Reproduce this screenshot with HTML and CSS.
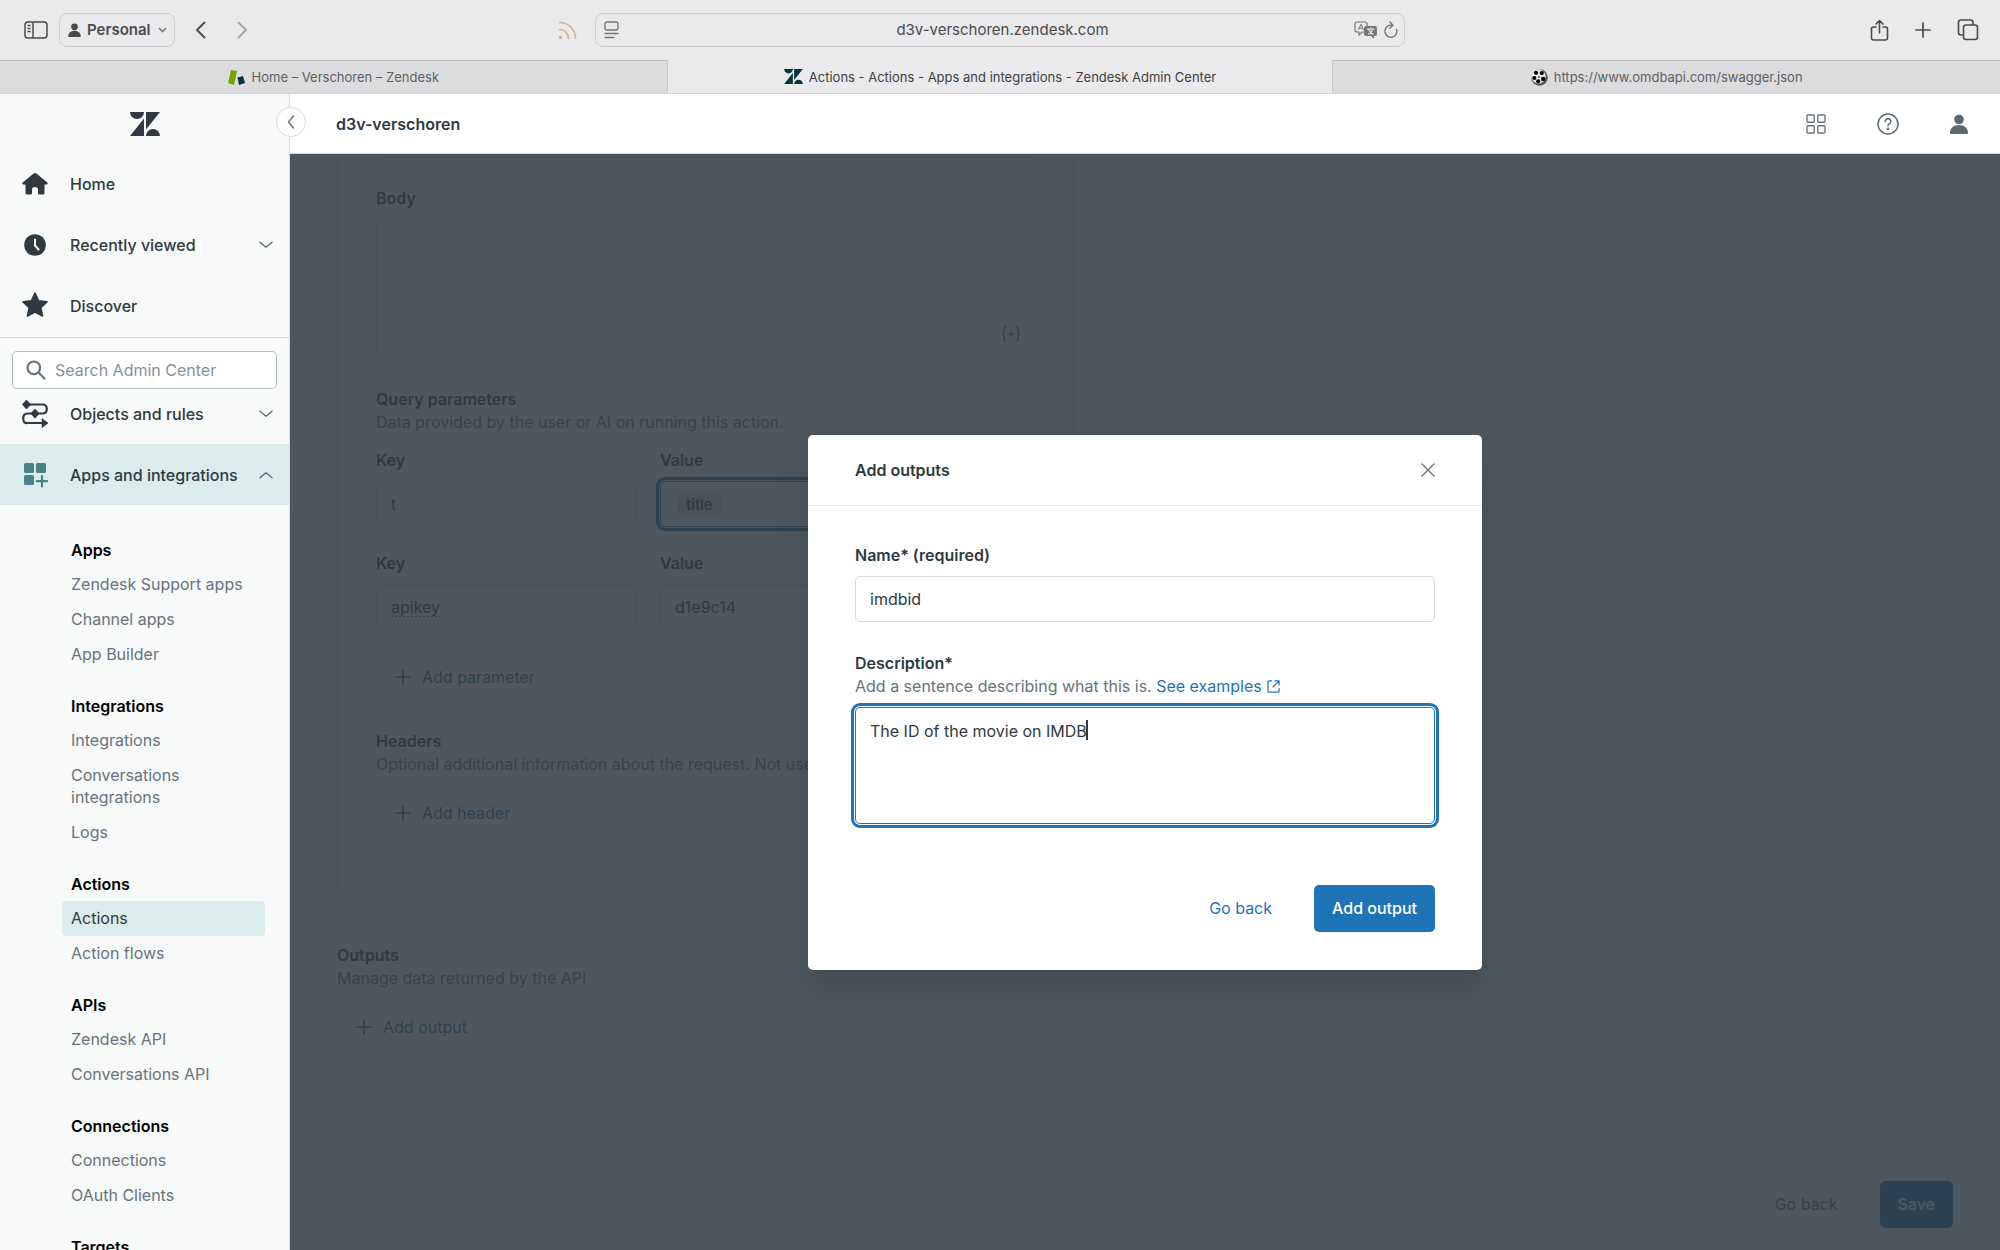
FILE: index.html
```html
<!DOCTYPE html>
<html lang="en">
<head>
<meta charset="utf-8">
<title>Actions - Actions - Apps and integrations - Zendesk Admin Center</title>
<link rel="stylesheet" href="styles.css">
</head>
<body>
<svg class="defs" aria-hidden="true">
  <symbol id="zmark" viewBox="0 0 30 24"><path d="M14 6.500V24H0zM14 0a7 7 0 0 1-14 0zM16 24a7 7 0 0 1 14 0zM16 17.500V0h14z"/></symbol>
  <symbol id="chev-down" viewBox="0 0 14 8"><path d="M1 1.200 7 6.200l6-5" fill="none" stroke="currentColor" stroke-width="1.300" stroke-linecap="round" stroke-linejoin="round"/></symbol>
  <symbol id="plus" viewBox="0 0 16 16"><path d="M8 1v14M1 8h14" fill="none" stroke="currentColor" stroke-width="1.700" stroke-linecap="round"/></symbol>
  <symbol id="person" viewBox="0 0 18 20"><circle cx="9" cy="5.500" r="4.800"/><path d="M1 20c-.6 0-1-.4-1-1 0-4.500 3.500-8 9-8s9 3.500 9 8c0 .6-.4 1-1 1z"/></symbol>
</svg>

<header class="browser">
  <div class="toolbar">
    <div class="tools-left">
      <button class="tool" aria-label="Show sidebar"><svg width="24" height="18" viewBox="0 0 24 18" fill="none" stroke="currentColor" stroke-width="1.500"><rect x="1" y="1" width="22" height="16" rx="3"/><path d="M9 1v16M3.500 4.500h3M3.500 7.500h3M3.500 10.500h3"/></svg></button>
      <button class="profile"><svg class="ico-profile" width="13" height="14"><use href="#person"/></svg><span>Personal</span><svg width="9" height="6" viewBox="0 0 9 6" fill="none" stroke="#77777a" stroke-width="1.600"><path d="m1 1 3.500 3.500L8 1"/></svg></button>
      <button class="tool back" aria-label="Back"><svg width="11" height="18" viewBox="0 0 11 18" fill="none" stroke="currentColor" stroke-width="1.900" stroke-linecap="round" stroke-linejoin="round"><path d="M9.500 1.500 2 9l7.500 7.500"/></svg></button>
      <button class="tool forward" aria-label="Forward"><svg width="11" height="18" viewBox="0 0 11 18" fill="none" stroke="currentColor" stroke-width="1.900" stroke-linecap="round" stroke-linejoin="round"><path d="M1.500 1.500 9 9l-7.500 7.500"/></svg></button>
      <button class="tool rss" aria-label="Feed"><svg width="19" height="19" viewBox="0 0 19 19" fill="none" stroke="currentColor" stroke-width="1.700" stroke-linecap="round"><circle cx="2.500" cy="16.500" r="1.800" fill="currentColor" stroke="none"/><path d="M1.500 8.500a9 9 0 0 1 9 9M1.500 1.500a16 16 0 0 1 16 16"/></svg></button>
    </div>
    <div class="address">
      <svg width="15" height="18" viewBox="0 0 15 18" fill="none" stroke="currentColor" stroke-width="1.400"><rect x="1" y="1" width="13" height="8" rx="2"/><path d="M.5 12.500h14M.5 16.500h10"/></svg>
      <input class="url" aria-label="Address" value="d3v-verschoren.zendesk.com">
      <svg width="24" height="18" viewBox="0 0 24 18"><path d="M3 1h8q2 0 2 2v6q0 2-2 2H8l-3 3v-3H3q-2 0-2-2V3q0-2 2-2z" fill="none" stroke="currentColor" stroke-width="1.200"/><path d="M4.500 9 7 3.200 9.500 9M5.300 7.200h3.400" fill="none" stroke="currentColor"/><path d="M12 5h9q2 0 2 2v6q0 2-2 2h-1v3l-3-3h-5q-2 0-2-2V7q0-2 2-2z" fill="currentColor"/><path d="M13 8h7.500M16.800 6.500V8M14.500 8q1.500 4 5 5.500M19 8q-1.500 4-5 5.500" fill="none" stroke="#eaeaec" stroke-width="1.100"/></svg>
      <button class="tool reload" aria-label="Reload"><svg width="14" height="18" viewBox="0 0 14 18" fill="none" stroke="currentColor" stroke-width="1.400" stroke-linecap="round" stroke-linejoin="round"><path d="M12.600 8.500A6 6 0 1 1 8.500 4.500M6 1l3 3.300-3.200 3"/></svg></button>
    </div>
    <div class="tools-right">
      <button class="tool" aria-label="Share"><svg width="19" height="22" viewBox="0 0 19 22" fill="none" stroke="currentColor" stroke-width="1.600" stroke-linecap="round" stroke-linejoin="round"><path d="M6 8H3.500Q1.500 8 1.500 10v9q0 2 2 2h12q2 0 2-2v-9q0-2-2-2H13M9.500 14V1.500M6 5l3.500-3.500L13 5"/></svg></button>
      <button class="tool" aria-label="New tab"><svg width="16" height="16"><use href="#plus"/></svg></button>
      <button class="tool" aria-label="Tab overview"><svg width="22" height="22" viewBox="0 0 22 22" fill="none" stroke="currentColor" stroke-width="1.600"><rect x="6.500" y="6" width="14" height="14.500" rx="2.500"/><path d="M6.500 16H4q-2.500 0-2.500-2.500v-10Q1.500 1 4 1h9.500Q16 1 16 3.500V6"/></svg></button>
    </div>
  </div>
  <nav class="tabs" aria-label="Tabs">
    <a class="tab" href="#"><svg width="18" height="15" viewBox="0 0 18 15"><path d="m3 0 6 1-3 14-6-2z" fill="#78a300"/><path d="m9.500 7.500 5.500-1.500 2 7-6 2z" fill="#03363d"/></svg>Home – Verschoren – Zendesk</a>
    <a class="tab current" href="#"><svg width="19" height="15" fill="#03363d"><use href="#zmark"/></svg>Actions - Actions - Apps and integrations - Zendesk Admin Center</a>
    <a class="tab" href="#"><svg width="17" height="17" viewBox="0 0 17 17"><circle cx="8.500" cy="8.500" r="8.300" fill="#555"/><circle cx="7.500" cy="7.500" r="7.200" fill="#e4e4e4"/><circle cx="5" cy="3.800" r="2.100"/><circle cx="10.800" cy="4" r="2.100"/><circle cx="3.300" cy="9" r="2"/><circle cx="12.200" cy="10" r="2.200"/><circle cx="7.200" cy="12.300" r="2.100"/><circle cx="8" cy="8" r="1" fill="#555"/></svg>https://www.omdbapi.com/swagger.json</a>
  </nav>
</header>

<div class="app">
  <aside class="sidebar">
    <a class="logo" href="#" aria-label="Zendesk"><svg width="30" height="24" fill="#2f3941"><use href="#zmark"/></svg></a>
    <nav class="main-nav">
      <a class="row" href="#"><svg width="26" height="22" viewBox="0 0 26 22"><path d="M11.700.5q1.300-1 2.600 0l11 9q1 1-.3 2h-2.500V20q0 1.500-1.500 1.500h-3.500Q16 21.500 16 20v-3.500q0-2.500-3-2.500t-3 2.500V20q0 1.500-1.500 1.500H5Q3.500 21.500 3.500 20v-8.500H1q-1.300-1-.3-2z"/></svg><span>Home</span></a>
      <a class="row" href="#"><svg width="26" height="22" viewBox="0 0 26 22"><circle cx="13" cy="11" r="10.800"/><path d="M13 5.500v6l3.500 4" fill="none" stroke="#f8f9f9" stroke-width="2" stroke-linecap="round"/></svg><span>Recently viewed</span><svg class="chev" width="14" height="8"><use href="#chev-down"/></svg></a>
      <a class="row" href="#"><svg width="26" height="28" viewBox="0 0 26 28"><path d="m13 1.200 3.600 7.700 8.300 1-6.100 5.800 1.700 8.300L13 20l-7.500 4 1.700-8.300L1.100 9.900l8.300-1z" stroke="#2f3941" stroke-linejoin="round" stroke-width="1.600"/></svg><span>Discover</span></a>
    </nav>
    <div class="search-wrap">
      <label class="search"><svg width="20" height="20" viewBox="0 0 20 20" fill="none" stroke="#68737d" stroke-width="2.200" stroke-linecap="round"><circle cx="7.800" cy="7.800" r="6.300"/><path d="m12.500 12.500 6 6"/></svg><input type="search" aria-label="Search Admin Center" placeholder="Search Admin Center"></label>
    </div>
    <nav class="admin-nav">
      <a class="row" href="#"><svg width="26" height="28" viewBox="0 0 26 28"><path d="M5 4.500h15.500q4.300 0 4.300 4.500t-4.300 4.500h-15Q1.200 13.500 1.200 18.500T5.500 23H21" fill="none" stroke="#2f3941" stroke-width="2.200"/><path d="m4.500 0 4.300 4.500L4.500 9 .2 4.500zM13 9l4.300 4.600L13 18.200l-4.300-4.600zM20 18.500l6 4.600-6 4.700z" stroke="#2f3941" stroke-width=".6" stroke-linejoin="round"/></svg><span>Objects and rules</span><svg class="chev" width="14" height="8"><use href="#chev-down"/></svg></a>
      <a class="row open" href="#"><svg width="26" height="26" viewBox="0 0 26 26" fill="#498283"><rect x="2" y="1" width="10" height="10" rx="1.500"/><rect x="14" y="1" width="10" height="10" rx="1.500"/><rect x="2" y="13" width="10" height="10" rx="1.500"/><path d="M20 14v10.500M14.800 19.200h10.500" stroke="#498283" stroke-width="2.200" stroke-linecap="round"/></svg><span>Apps and integrations</span><svg class="chev up" width="14" height="8"><use href="#chev-down"/></svg></a>
      <div class="groups">
        <section class="group"><h2>Apps</h2><a href="#">Zendesk Support apps</a><a href="#">Channel apps</a><a href="#">App Builder</a></section>
        <section class="group"><h2>Integrations</h2><a href="#">Integrations</a><a href="#">Conversations<br>integrations</a><a href="#">Logs</a></section>
        <section class="group"><h2>Actions</h2><a class="selected" href="#">Actions</a><a href="#">Action flows</a></section>
        <section class="group"><h2>APIs</h2><a href="#">Zendesk API</a><a href="#">Conversations API</a></section>
        <section class="group"><h2>Connections</h2><a href="#">Connections</a><a href="#">OAuth Clients</a></section>
        <section class="group"><h2>Targets</h2></section>
      </div>
    </nav>
    <button class="collapse" aria-label="Collapse navigation"><svg width="8" height="14" viewBox="0 0 8 14" fill="none" stroke="#68737d" stroke-width="1.500" stroke-linecap="round" stroke-linejoin="round"><path d="M6.500 1 1.500 7l5 6"/></svg></button>
  </aside>

  <div class="workspace">
    <header class="topbar">
      <h1>d3v-verschoren</h1>
      <div class="topbar-tools">
        <button class="tool" aria-label="Products"><svg width="20" height="20" viewBox="0 0 20 20" fill="none" stroke="#68737d" stroke-width="1.400"><rect x="1" y="1" width="7.300" height="7.300" rx="1"/><rect x="11.700" y="1" width="7.300" height="7.300" rx="1"/><rect x="1" y="11.700" width="7.300" height="7.300" rx="1"/><rect x="11.700" y="11.700" width="7.300" height="7.300" rx="1"/></svg></button>
        <button class="tool" aria-label="Help"><svg width="22" height="22" viewBox="0 0 22 22" fill="none" stroke="#5c6970" stroke-width="1.500" stroke-linecap="round"><circle cx="11" cy="11" r="10"/><path d="M8.200 8.600q0-2.800 2.800-2.800t2.800 2.600q0 1.400-1.400 2.300T11 12.800"/><circle cx="11" cy="15.800" r=".5" fill="#5c6970"/></svg></button>
        <button class="tool" aria-label="Account"><svg width="18" height="20" fill="#5c6970"><use href="#person"/></svg></button>
      </div>
    </header>

    <div class="stage">
      <main class="content">
        <section class="card">
          <input class="field" aria-label="Endpoint">
          <label class="caption" for="body">Body</label>
          <div class="body-box">
            <textarea id="body" class="field"></textarea>
            <button class="placeholder" aria-label="Insert placeholder"><svg width="20" height="16" viewBox="0 0 20 16" fill="none" stroke="#68737d" stroke-width="1.300" stroke-linecap="round"><path d="M5 1Q3 1 3 3v3q0 2-2 2 2 0 2 2v3q0 2 2 2M15 1q2 0 2 2v3q0 2 2 2-2 0-2 2v3q0 2-2 2M10 5.500v5M7.500 8h5"/></svg></button>
          </div>
          <h2>Query parameters</h2>
          <p>Data provided by the user or AI on running this action.</p>
          <div class="pair">
            <div><label class="caption" for="k1">Key</label><input id="k1" class="field" value="t"></div>
            <div><span class="caption" id="v1">Value</span><div class="field focused" role="textbox" aria-labelledby="v1"><span class="chip">title</span></div></div>
          </div>
          <div class="pair">
            <div><label class="caption" for="k2">Key</label><input id="k2" class="field misspelt" value="apikey"></div>
            <div><label class="caption" for="v2">Value</label><input id="v2" class="field" value="d1e9c14"></div>
          </div>
          <button class="add add-param"><svg width="16" height="16"><use href="#plus"/></svg>Add parameter</button>
          <h2>Headers</h2>
          <p class="one-line">Optional additional information about the request. Not used by the AI.</p>
          <button class="add"><svg width="16" height="16"><use href="#plus"/></svg>Add header</button>
        </section>
        <section class="outputs">
          <h2>Outputs</h2>
          <p>Manage data returned by the API</p>
          <button class="add"><svg width="16" height="16"><use href="#plus"/></svg>Add output</button>
        </section>
      </main>
      <footer class="actions"><button class="link">Go back</button><button class="primary">Save</button></footer>

      <div class="backdrop">
        <div class="modal" role="dialog" aria-labelledby="dlg">
          <header class="modal-head"><h2 id="dlg">Add outputs</h2><button class="tool" aria-label="Close"><svg width="14" height="14" viewBox="0 0 14 14" fill="none" stroke="#68737d" stroke-width="1.300" stroke-linecap="round"><path d="m1 1 12 12M13 1 1 13"/></svg></button></header>
          <div class="modal-body">
            <label class="caption" for="name">Name* (required)</label>
            <input id="name" class="field" value="imdbid">
            <label class="description-label" for="desc">Description*</label>
            <p class="hint">Add a sentence describing what this is. <a href="#">See examples<svg width="13" height="13" viewBox="0 0 14 14" fill="none" stroke="currentColor" stroke-width="1.300" stroke-linecap="round" stroke-linejoin="round"><path d="M5 1H2Q1 1 1 2v10q0 1 1 1h10q1 0 1-1V9M8.500 1H13v4.500M13 1 6.500 7.500"/></svg></a></p>
            <div class="description">
              <textarea id="desc" class="field focused" spellcheck="false">The ID of the movie on IMDB</textarea>
              <span class="caret"></span>
            </div>
          </div>
          <footer class="modal-foot"><button class="link">Go back</button><button class="primary">Add output</button></footer>
        </div>
      </div>
    </div>
  </div>
</div>
</body>
</html>
```
FILE: styles.css
```css
* { box-sizing: border-box; }
body {
  margin: 0;
  height: 100vh;
  display: flex;
  flex-direction: column;
  overflow: hidden;
  font: 16px/22px Inter, "Liberation Sans", sans-serif;
  color: #2f3941;
  background: #fff;
}
h1, h2, p { margin: 0; font-size: 16px; }
h1, h2 { font-weight: 600; }
button, input, textarea { font: inherit; color: inherit; }
button { border: 0; padding: 0; background: none; }
a { color: inherit; text-decoration: none; }
svg { flex: none; display: block; }
.defs { position: absolute; width: 0; height: 0; }
.tool { display: flex; }

/* Browser window */
.browser { flex: none; background: #eaeaec; color: #4b4b4d; }
.toolbar {
  height: 60px;
  display: grid;
  grid-template-columns: 1fr minmax(0, 810px) 1fr;
  align-items: center;
}
.tools-left { display: flex; align-items: center; padding: 0 18px 0 24px; }
.profile {
  display: flex;
  align-items: center;
  gap: 6px;
  height: 34px;
  margin: 0 20px 0 11px;
  padding: 0 7px 0 8px;
  border: 1px solid #cfcfd1;
  border-radius: 8px;
  font-size: 15px;
  font-weight: 600;
}
.profile svg:last-child { margin-left: 2px; }
.ico-profile { fill: #4b4b4d; }
.forward { margin-left: 31px; color: #a5a5a7; }
.rss { margin-left: auto; color: #d6b48c; }
.address {
  height: 34px;
  display: flex;
  align-items: center;
  padding: 0 6px 0 8px;
  gap: 6px;
  border: 1px solid #cfcfd1;
  border-radius: 8px;
  color: #77777a;
}
.url {
  flex: 1;
  min-width: 0;
  padding: 0 0 0 32px;
  border: 0;
  background: none;
  text-align: center;
  font-size: 15px;
  color: #4b4b4d;
}
.tools-right { display: flex; align-items: center; justify-content: flex-end; gap: 26px; padding-right: 21px; }
.tabs { display: grid; grid-template-columns: repeat(3, 1fr); height: 34px; border-bottom: 1px solid #d5d5d7; }
.tab {
  display: flex;
  align-items: center;
  justify-content: center;
  gap: 6px;
  font-size: 13px;
  color: #5f5f61;
  background: #dcdcde;
  border-top: 1px solid #c0c0c2;
  white-space: nowrap;
}
.tab.current { background: none; border: solid #cbcbcd; border-width: 0 1px; color: #3f3f41; }

/* Admin navigation */
.app { flex: 1; min-height: 0; display: flex; }
.sidebar {
  position: relative;
  z-index: 1;
  flex: none;
  width: 290px;
  background: #f8f9f9;
  border-right: 1px solid #d8dcde;
}
.logo { display: flex; justify-content: center; padding: 18px 0 17px; }
.main-nav { padding-bottom: 1px; border-bottom: 1px solid #d8dcde; }
.row {
  display: flex;
  align-items: center;
  height: 61px;
  padding: 0 16px 0 22px;
  font-weight: 500;
  white-space: nowrap;
  fill: #2f3941;
}
.row span { margin-left: 22px; }
.chev { margin-left: auto; color: #5c6970; }
.up { transform: rotate(180deg); }
.open { background: #daeceb; }
.search-wrap { padding: 13px 12px 0; }
.search {
  display: flex;
  align-items: center;
  gap: 9px;
  height: 38px;
  padding: 0 13px;
  border: 1px solid #b4bbc1;
  border-radius: 5px;
  background: #fff;
}
.search input { flex: 1; min-width: 0; border: 0; padding: 0; background: none; outline: none; }
.search input::placeholder { color: #87929d; }
.admin-nav { margin-top: -6px; }
.groups { padding: 11px 24px 0 62px; }
.group { padding-top: 23px; }
.group h2 { padding: 0 9px 6px; color: #000; line-height: 22px; }
.group a { display: block; padding: 6px 9px 7px; border-radius: 4px; color: #68737d; }
.group .selected { background: #daeceb; color: #2f3941; }
.collapse {
  position: absolute;
  top: 13px;
  right: -17px;
  width: 30px;
  height: 30px;
  display: grid;
  place-items: center;
  border: 1px solid #d8dcde;
  border-radius: 50%;
  background: #fff;
}

/* Workspace */
.workspace { flex: 1; min-width: 0; display: flex; flex-direction: column; }
.topbar {
  flex: none;
  height: 60px;
  display: flex;
  align-items: center;
  justify-content: space-between;
  padding: 0 32px 0 46px;
  border-bottom: 1px solid #d8dcde;
}
.topbar-tools { display: flex; align-items: center; gap: 51px; }
.stage { position: relative; flex: 1; min-height: 0; display: flex; flex-direction: column; }
.content { flex: 1; min-height: 0; overflow: hidden; padding: 0 47px; }
.card {
  max-width: 737px;
  margin-top: -43px;
  padding: 0 38px 66px;
  border: 1px solid #d8dcde;
  border-top: 0;
  border-radius: 0 0 14px 14px;
}
.caption { display: block; margin-bottom: 10px; font-weight: 600; }
.field {
  display: block;
  width: 100%;
  height: 46px;
  padding: 0 14px;
  border: 1px solid #d8dcde;
  border-radius: 5px;
  background: #fff;
  outline: none;
  resize: none;
}
.field.focused { border-color: #1f73b7; box-shadow: 0 0 0 1px #fff, 0 0 0 4px #1f73b7; }
.card > .field { margin-bottom: 30px; }
.body-box { position: relative; margin-bottom: 29px; }
.body-box .field { height: 140px; }
.placeholder { position: absolute; right: 14px; bottom: 17px; }
.card p, .outputs p, .hint { color: #68737d; line-height: 23px; }
.card h2, .outputs h2 { line-height: 23px; }
.one-line { white-space: nowrap; }
.pair { display: grid; grid-template-columns: 260px 260px; gap: 24px; padding-top: 15px; margin-bottom: 10px; }
.chip {
  display: inline-block;
  margin: 13px 0 0 2px;
  padding: 0 9px;
  border-radius: 4px;
  background: #d8dcde;
  font-size: 15px;
  font-weight: 500;
  line-height: 20px;
}
.misspelt { text-decoration: underline dotted #e03131 2px; text-underline-offset: 3px; }
.add { display: flex; align-items: center; gap: 11px; height: 46px; margin: 14px 0 0 19px; color: #1f73b7; }
.add-param { margin: 24px 0 30px 19px; }
.outputs { padding-top: 41px; }
.actions {
  flex: none;
  height: 93px;
  display: flex;
  align-items: center;
  justify-content: flex-end;
  gap: 42px;
  padding-right: 47px;
  border-top: 1px solid #d8dcde;
}
.link { color: #1f73b7; }
.primary { height: 47px; padding: 0 18px; border-radius: 5px; background: #1f73b7; color: #fff; font-weight: 500; }

/* Add outputs dialog */
.backdrop {
  position: absolute;
  inset: 0;
  display: flex;
  align-items: center;
  justify-content: center;
  background: rgba(47, 57, 65, 0.85);
}
.modal {
  width: 674px;
  border-radius: 5px;
  background: #fff;
  box-shadow: 0 24px 32px rgba(47, 57, 65, 0.35);
}
.modal-head {
  display: flex;
  align-items: center;
  justify-content: space-between;
  height: 71px;
  padding: 0 47px;
  border-bottom: 1px solid #e9ebed;
}
.modal-body { padding: 38px 47px 0; }
.description-label { display: block; margin-top: 30px; font-weight: 600; line-height: 23px; }
.hint a { color: #1f73b7; }
.hint svg { display: inline-block; margin-left: 5px; vertical-align: -1px; }
.description { position: relative; margin-top: 9px; }
.description .field { height: 117px; padding-top: 12px; }
.caret { position: absolute; left: 231px; top: 13px; width: 2px; height: 20px; background: #2f3941; }
.modal-foot { display: flex; justify-content: flex-end; gap: 42px; padding: 61px 47px 38px; }
```
